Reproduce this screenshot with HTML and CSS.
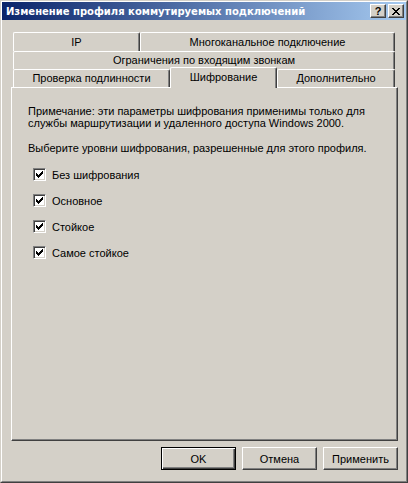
FILE: index.html
```html
<!DOCTYPE html>
<html lang="ru">
<head>
<meta charset="utf-8">
<title>Изменение профиля коммутируемых подключений</title>
<link rel="stylesheet" href="styles.css">
</head>
<body>
<div class="window">
  <div class="titlebar">
    <span class="title">Изменение профиля коммутируемых подключений</span>
    <div class="caption-buttons">
      <span class="cap-btn help">?</span>
      <span class="cap-btn close">
        <svg width="8" height="7" viewBox="0 0 8 7" shape-rendering="crispEdges"><path d="M0 0h2v1h-2z M6 0h2v1h-2z M1 1h2v1h-2z M5 1h2v1h-2z M2 2h4v1h-4z M3 3h2v1h-2z M2 4h4v1h-4z M1 5h2v1h-2z M5 5h2v1h-2z M0 6h2v1h-2z M6 6h2v1h-2z" fill="#000"/></svg>
      </span>
    </div>
  </div>
  <div class="body">
    <div class="tabs">
      <div class="tab-row row1">
        <div class="tab tab-ip">IP</div>
        <div class="tab tab-multi">Многоканальное подключение</div>
      </div>
      <div class="tab-row row2">
        <div class="tab tab-limits">Ограничения по входящим звонкам</div>
      </div>
      <div class="tab-row row3">
        <div class="tab tab-auth">Проверка подлинности</div>
        <div class="tab tab-enc selected">Шифрование</div>
        <div class="tab tab-adv">Дополнительно</div>
      </div>
    </div>
    <div class="panel">
      <p class="note">Примечание: эти параметры шифрования применимы только для службы маршрутизации и удаленного доступа Windows 2000.</p>
      <p class="choose">Выберите уровни шифрования, разрешенные для этого профиля.</p>
      <div class="checks">
        <div class="check-row"><span class="box"><svg width="7" height="7" viewBox="0 0 7 7" shape-rendering="crispEdges"><path d="M6 0h1v3h-1z M5 1h1v3h-1z M4 2h1v3h-1z M3 3h1v3h-1z M2 4h1v3h-1z M1 3h1v3h-1z M0 2h1v3h-1z" fill="#000"/></svg></span><span class="label">Без шифрования</span></div>
        <div class="check-row"><span class="box"><svg width="7" height="7" viewBox="0 0 7 7" shape-rendering="crispEdges"><path d="M6 0h1v3h-1z M5 1h1v3h-1z M4 2h1v3h-1z M3 3h1v3h-1z M2 4h1v3h-1z M1 3h1v3h-1z M0 2h1v3h-1z" fill="#000"/></svg></span><span class="label">Основное</span></div>
        <div class="check-row"><span class="box"><svg width="7" height="7" viewBox="0 0 7 7" shape-rendering="crispEdges"><path d="M6 0h1v3h-1z M5 1h1v3h-1z M4 2h1v3h-1z M3 3h1v3h-1z M2 4h1v3h-1z M1 3h1v3h-1z M0 2h1v3h-1z" fill="#000"/></svg></span><span class="label">Стойкое</span></div>
        <div class="check-row"><span class="box"><svg width="7" height="7" viewBox="0 0 7 7" shape-rendering="crispEdges"><path d="M6 0h1v3h-1z M5 1h1v3h-1z M4 2h1v3h-1z M3 3h1v3h-1z M2 4h1v3h-1z M1 3h1v3h-1z M0 2h1v3h-1z" fill="#000"/></svg></span><span class="label">Самое стойкое</span></div>
      </div>
    </div>
    <div class="buttons">
      <div class="btn default"><span>OK</span></div>
      <div class="btn"><span>Отмена</span></div>
      <div class="btn"><span>Применить</span></div>
    </div>
  </div>
</div>
</body>
</html>
```
FILE: styles.css
```css
html, body {
  margin: 0;
  padding: 0;
  background: #d4d0c8;
}
body {
  font-family: "Liberation Sans", Arial, sans-serif;
  font-size: 11px;
  color: #000;
}
.window {
  width: 408px;
  height: 483px;
  box-sizing: border-box;
  border: 1px solid;
  border-color: #d4d0c8 #404040 #404040 #d4d0c8;
  background: #d4d0c8;
  display: flex;
  flex-direction: column;
}
.titlebar {
  height: 18px;
  margin: 0;
  background: linear-gradient(to right, #0a246a, #a6caf0);
  display: flex;
  align-items: center;
  justify-content: space-between;
  border-top: 1px solid #fff;
  border-left: 1px solid #fff;
  border-right: 1px solid #808080;
}
.title {
  color: #fff;
  font-family: "DejaVu Sans", Verdana, sans-serif;
  font-weight: bold;
  font-size: 10px;
  padding-left: 4px;
  white-space: nowrap;
}
.caption-buttons {
  display: flex;
  gap: 2px;
  margin-right: 2px;
}
.cap-btn {
  width: 16px;
  height: 14px;
  box-sizing: border-box;
  background: #d4d0c8;
  border: 1px solid;
  border-color: #fff #404040 #404040 #fff;
  box-shadow: inset -1px -1px 0 #808080;
  display: flex;
  align-items: center;
  justify-content: center;
  font-family: "Liberation Sans", Arial, sans-serif;
  font-weight: bold;
  font-size: 11px;
  line-height: 1;
}
.body {
  flex: 1;
  padding: 12px 8px 0 9px;
  border-left: 1px solid #fff;
  border-right: 1px solid #808080;
  border-bottom: 1px solid #808080;
  display: flex;
  flex-direction: column;
}
.tabs {
  margin: 0 3px 0 2px;
  display: flex;
  flex-direction: column;
}
.tab-row {
  display: flex;
}
.row1 { height: 19px; }
.row2 { height: 18px; }
.row3 { height: 18px; position: relative; z-index: 1; }
.tab {
  box-sizing: border-box;
  border-top: 1px solid #fff;
  border-left: 1px solid #fff;
  border-right: 1px solid #404040;
  border-top-left-radius: 2px;
  border-top-right-radius: 2px;
  box-shadow: inset -1px 0 0 #808080;
  background: #d4d0c8;
  display: flex;
  align-items: center;
  justify-content: center;
  white-space: nowrap;
  padding-bottom: 1px;
}
.tab-ip { width: 127px; }
.tab-multi { flex: 1; }
.tab-limits { flex: 1; }
.tab-auth { width: 157px; }
.tab-enc { width: 107px; }
.tab-adv { flex: 1; }
.tab.selected {
  margin-top: -2px;
  height: 21px;
  padding-bottom: 3px;
}
.panel {
  height: 354px;
  box-sizing: border-box;
  border: 1px solid;
  border-color: #fff #404040 #404040 #fff;
  box-shadow: inset -1px -1px 0 #808080;
  padding: 17px 12px 0 16px;
}
.panel p {
  margin: 0;
  line-height: 12px;
}
.note { width: 345px; }
.choose { margin-top: 13px !important; }
.checks {
  margin-top: 14px;
  margin-left: 5px;
  display: flex;
  flex-direction: column;
  gap: 13px;
}
.check-row {
  display: flex;
  align-items: center;
  height: 13px;
}
.box {
  width: 13px;
  height: 13px;
  box-sizing: border-box;
  background: #fff;
  border: 1px solid;
  border-color: #808080 #fff #fff #808080;
  box-shadow: inset 1px 1px 0 #404040, inset -1px -1px 0 #d4d0c8;
  display: flex;
  align-items: center;
  justify-content: center;
}
.label { margin-left: 6px; }
.buttons {
  margin-top: 6px;
  display: flex;
  justify-content: flex-end;
  gap: 6px;
}
.btn {
  width: 75px;
  height: 23px;
  box-sizing: border-box;
  border: 1px solid;
  border-color: #fff #404040 #404040 #fff;
  box-shadow: inset -1px -1px 0 #808080;
  display: flex;
  align-items: center;
  justify-content: center;
}
.btn.default {
  border: 1px solid #000;
  box-shadow: inset 1px 1px 0 #fff, inset -1px -1px 0 #404040, inset -2px -2px 0 #808080;
}
```
